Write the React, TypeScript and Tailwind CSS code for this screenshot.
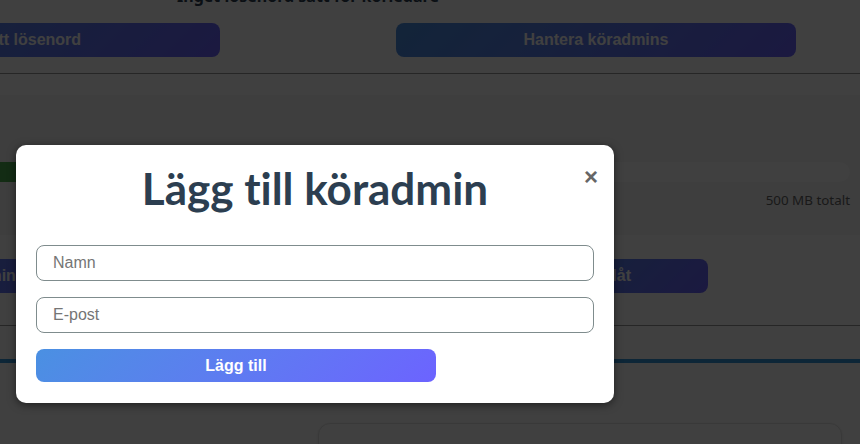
import React from "react";

const gradient = "bg-linear-135 from-[#4a90e2] to-[#6c63ff]";

function PageBehind() {
  return (
    <div className="-mt-[15px]">
      {/* password row */}
      <div className="pb-4">
        <div className="-ml-[180px] w-[976px]">
          <p className="text-center font-['Noto_Sans',sans-serif] text-base font-bold leading-[22px] text-[#2c3e50]">
            Inget lösenord satt för körledare
          </p>
        </div>
        <div className="-ml-[160px] mt-4 flex w-[956px] justify-between">
          <button className={`h-[34px] w-[380px] rounded-lg ${gradient} text-base font-bold text-white`}>
            Sätt lösenord
          </button>
          <button className={`h-[34px] w-[400px] rounded-lg ${gradient} text-base font-bold text-white`}>
            Hantera köradmins
          </button>
        </div>
      </div>
      <div className="border-t border-[#999]" />

      {/* storage */}
      <div className="pt-[21px]">
        <div className="bg-[#f6f6f6] pt-[67px] pb-[25px]">
          <div className="-ml-[120px] w-[970px]">
            <div className="h-5 overflow-hidden rounded-full bg-[#fdfdfd]">
              <div className="h-full w-[30%] bg-[#4caf50]" />
            </div>
            <div className="mt-2 flex justify-end font-['Noto_Sans',sans-serif] text-[13.4px] leading-5 text-[#666]">
              <span>500 MB totalt</span>
            </div>
          </div>
        </div>
      </div>

      {/* admin actions */}
      <div className="pt-6 pb-8">
        <div className="-ml-[253px] flex w-[961px] justify-between">
          <button className={`h-[34px] w-[400px] rounded-lg ${gradient} text-base font-bold text-white`}>
            Lägg till köradmin
          </button>
          <button className={`h-[34px] w-[191px] rounded-lg ${gradient} text-base font-bold text-white`}>
            Tillåt
          </button>
        </div>
      </div>
      <div className="border-t border-[#999]" />
      <div className="mt-[33px] h-1 bg-[#3498db]" />
      <div className="flex justify-end pt-[60px] pr-[18px]">
        <div className="h-24 w-[524px] rounded-xl border border-[#e3e3e3] bg-white shadow-sm" />
      </div>
    </div>
  );
}

export default function App() {
  return (
    <div className="relative h-[444px] w-[860px] overflow-hidden bg-white font-['Liberation_Sans',Arial,sans-serif]">
      <PageBehind />

      {/* dim overlay */}
      <div className="absolute inset-0 bg-black/75" />

      {/* dialog */}
      <div className="absolute top-[145px] left-4 w-[598px] rounded-[10px] bg-white px-5 pt-[18px] pb-[21px] shadow-[0_2px_8px_rgba(0,0,0,0.5)]">
        <button className="absolute top-[20px] right-[16px] text-2xl leading-none font-bold text-[#666]">
          ×
        </button>
        <h2 className="text-center font-['Lato',sans-serif] text-[44px] leading-[50px] font-bold text-[#2c3e50] [font-variant-ligatures:none]">
          Lägg till köradmin
        </h2>
        <input
          type="text"
          placeholder="Namn"
          className="mt-8 block h-9 w-full rounded-lg border border-[#7f8c8d] px-4 text-base text-[#333] outline-none placeholder:text-[#757575]"
        />
        <input
          type="email"
          placeholder="E-post"
          className="mt-4 block h-9 w-full rounded-lg border border-[#7f8c8d] px-4 text-base text-[#333] outline-none placeholder:text-[#757575]"
        />
        <button className={`mt-4 block h-[33px] w-[400px] rounded-lg ${gradient} text-base font-bold text-white`}>
          Lägg till
        </button>
      </div>
    </div>
  );
}
